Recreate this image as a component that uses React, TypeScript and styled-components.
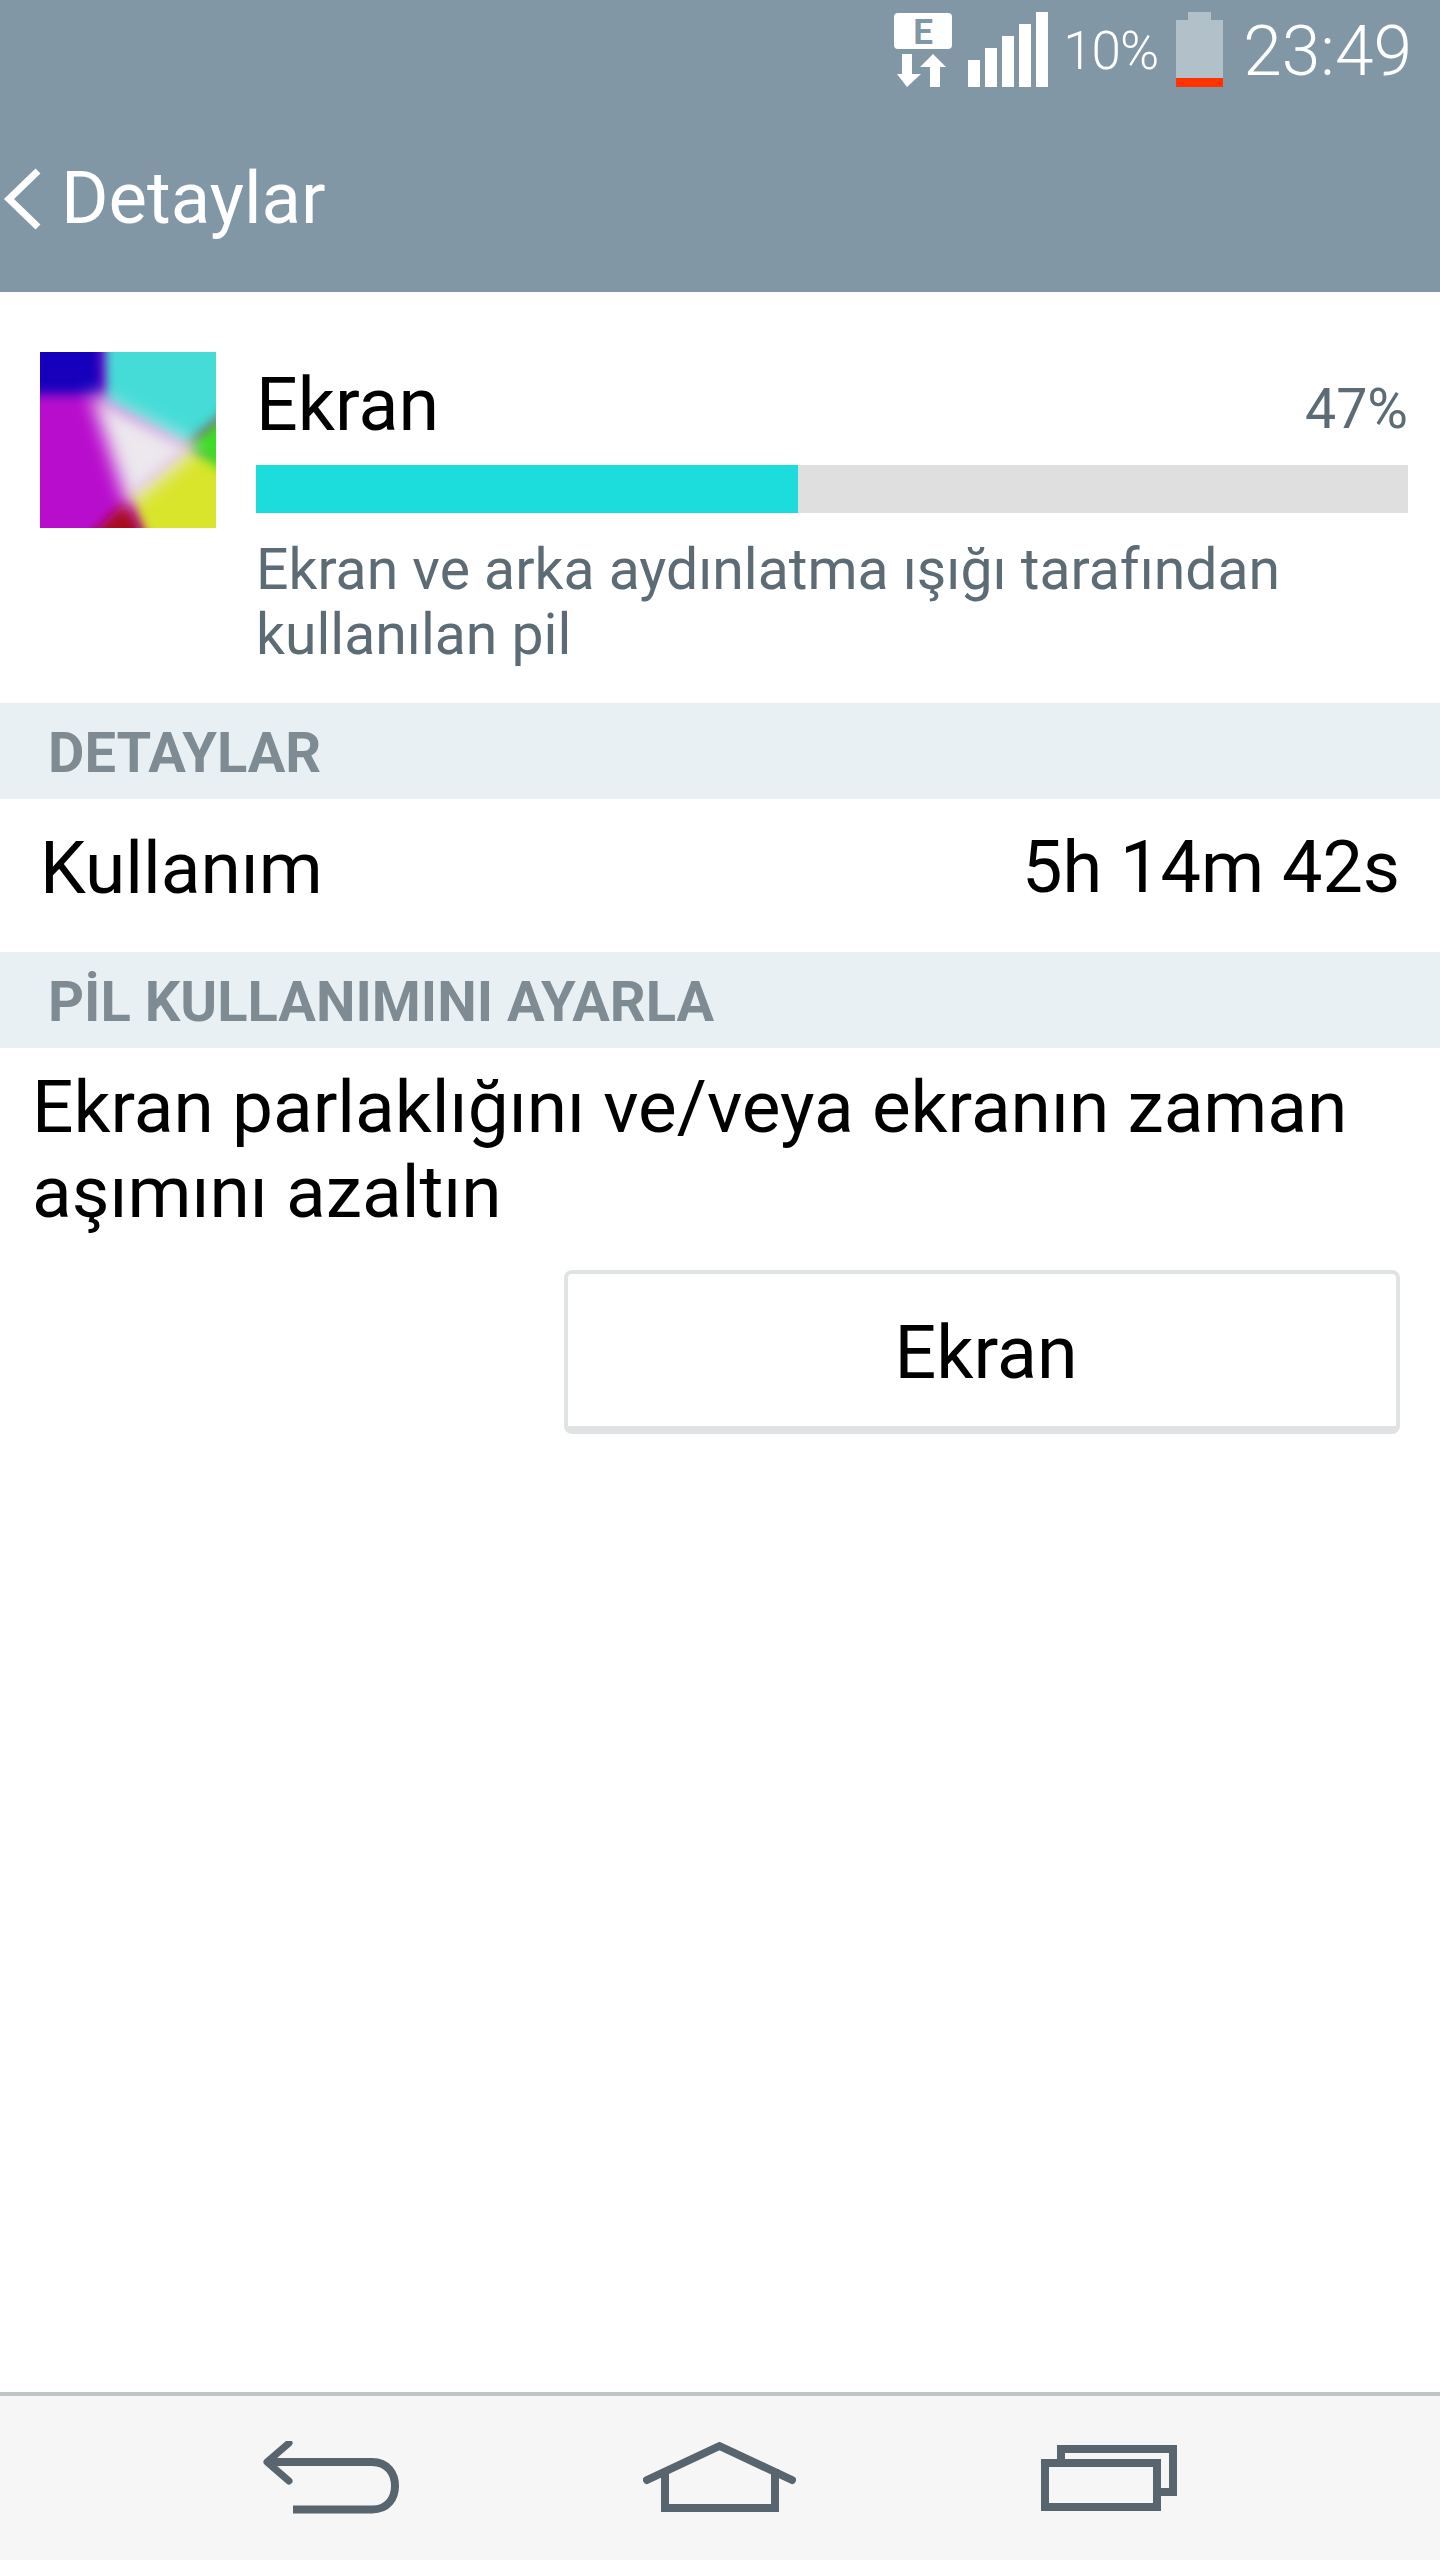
import * as React from 'react';
import styled, { createGlobalStyle } from 'styled-components';

const GlobalStyle = createGlobalStyle`
  html, body {
    margin: 0;
    padding: 0;
    background: #fff;
    font-family: Roboto, "Liberation Sans", sans-serif;
  }
`;

const Screen = styled.div`
  display: flex;
  flex-direction: column;
  width: 1440px;
  height: 2560px;
  background: #fff;
  color: #000;
`;

const Header = styled.header`
  flex: 0 0 292px;
  background: #8197a5;
  color: #fff;
`;

const StatusBar = styled.div`
  display: flex;
  justify-content: flex-end;
  align-items: center;
  gap: 18px;
  height: 75px;
  padding: 12px 28px 0 0;
`;

const NetworkIcon = styled.svg`
  margin-right: -2px;
`;

const Percent = styled.span`
  margin: 3px 0 0 -3px;
  font-size: 53px;
  font-weight: 300;
  line-height: 75px;
  letter-spacing: -1px;
`;

const Clock = styled.span`
  margin: 3px 0 0 2px;
  font-size: 69.5px;
  font-weight: 300;
  line-height: 75px;
`;

const TitleBar = styled.div`
  display: flex;
  align-items: center;
  gap: 20px;
  height: 70px;
  margin-top: 77px;
  padding-left: 3px;
`;

const Title = styled.h1`
  margin: 0;
  font-size: 72.5px;
  font-weight: 400;
  line-height: 70px;
`;

const Summary = styled.section`
  display: flex;
  gap: 40px;
  height: 411px;
  padding: 60px 32px 0 40px;
  box-sizing: border-box;
`;

const AppIcon = styled.svg`
  flex: 0 0 176px;
  width: 176px;
  height: 176px;
`;

const SummaryBody = styled.div`
  flex: 1;
  min-width: 0;
`;

const SummaryHead = styled.div`
  display: flex;
  justify-content: space-between;
  align-items: flex-start;
  height: 113px;
`;

const AppName = styled.span`
  margin-top: 10px;
  font-size: 73.5px;
  line-height: 86px;
`;

const Share = styled.span`
  margin-top: 20px;
  color: #5d6b75;
  font-size: 55.5px;
  line-height: 76px;
`;

const Track = styled.div`
  height: 48px;
  background: #dfdfdf;
`;

const Fill = styled.div`
  height: 100%;
  background: #1cdcdc;
`;

const Description = styled.p`
  margin: 24px 0 0;
  color: #5d6b75;
  font-size: 57.1px;
  line-height: 65px;
`;

const SectionHeader = styled.h2`
  height: 96px;
  margin: 0;
  padding: 4px 0 0 48px;
  box-sizing: border-box;
  background: #e9f0f3;
  color: #7f8b93;
  font-size: 56px;
  font-weight: 700;
  line-height: 92px;
`;

const UsageRow = styled.div`
  display: flex;
  justify-content: space-between;
  align-items: center;
  height: 153px;
  padding: 0 40px 16px 40px;
  box-sizing: border-box;
  font-size: 72px;
`;

const UsageLabel = styled.span`
  font-size: 73px;
`;

const Advice = styled.p`
  margin: 0;
  padding: 17px 40px 0 32px;
  font-size: 73px;
  line-height: 85px;
`;

const ActionRow = styled.div`
  display: flex;
  justify-content: flex-end;
  padding: 35px 40px 0 0;
`;

const ActionButton = styled.button`
  width: 836px;
  height: 164px;
  padding: 6px 0 0 8px;
  border: 4px solid #e0e3e4;
  border-bottom-width: 8px;
  border-radius: 8px;
  background: #fff;
  color: #000;
  font-family: inherit;
  font-size: 73.5px;
`;

const Spacer = styled.div`
  flex: 1;
`;

const NavBar = styled.nav`
  display: grid;
  flex: 0 0 164px;
  grid-template-columns: repeat(3, 1fr);
  align-items: center;
  padding: 0 136px;
  border-top: 4px solid #bdc5c6;
  background: #f6f6f6;
`;

const NavIcon = styled.svg`
  justify-self: center;
  fill: none;
  stroke: #59656e;
  stroke-width: 8;
`;

function ScreenGradient() {
  return (
    <AppIcon viewBox="0 0 176 176">
      <defs>
        <filter id="tight" x="-50%" y="-50%" width="200%" height="200%">
          <feGaussianBlur stdDeviation="6" />
        </filter>
        <filter id="soft" x="-50%" y="-50%" width="200%" height="200%">
          <feGaussianBlur stdDeviation="9" />
        </filter>
      </defs>
      <rect width="176" height="176" fill="#b80dcd" />
      <polygon points="62,-30 210,-30 210,40 145,95 65,50" fill="#45dcd7" filter="url(#tight)" />
      <rect x="-30" y="-30" width="92" height="72" fill="#1400bd" filter="url(#tight)" />
      <polygon points="145,95 210,110 210,210 112,210 90,140" fill="#d9e52b" filter="url(#tight)" />
      <polygon points="210,40 145,95 210,135" fill="#3ade24" filter="url(#tight)" />
      <polygon points="25,210 85,150 118,210" fill="#a8101a" filter="url(#tight)" />
      <polygon points="50,40 160,95 88,155" fill="#ece8ee" filter="url(#soft)" />
    </AppIcon>
  );
}

export default function App() {
  return (
    <>
      <GlobalStyle />
      <Screen>
        <Header>
          <StatusBar>
            <NetworkIcon width="58" height="75" viewBox="0 0 58 75">
              <rect y="1" width="58" height="36" rx="4" fill="#fff" />
              <text x="29" y="32" textAnchor="middle" fontSize="35" fontWeight="700" fontFamily="Roboto" fill="#8197a5">E</text>
              <path d="M8 42h10v20h9L13 75 3 62h5zM36 75V55H26l13-13 13 13H46v20z" fill="#fff" />
            </NetworkIcon>
            <svg width="80" height="75" viewBox="0 0 80 75" fill="#fff">
              <rect y="48" width="12" height="27" />
              <rect x="17" y="36" width="12" height="39" />
              <rect x="34" y="24" width="12" height="51" />
              <rect x="51" y="12" width="12" height="63" />
              <rect x="68" width="12" height="75" />
            </svg>
            <Percent>10%</Percent>
            <svg width="47" height="75" viewBox="0 0 47 75">
              <path d="M12 0h23v8h12v58H0V8h12z" fill="#b2c1c9" />
              <rect y="66" width="47" height="9" fill="#ff3300" />
            </svg>
            <Clock>23:49</Clock>
          </StatusBar>
          <TitleBar>
            <svg width="38" height="62" viewBox="0 0 38 62" fill="none" stroke="#fff" strokeWidth="7">
              <path d="M35 3 6 31l29 28" />
            </svg>
            <Title>Detaylar</Title>
          </TitleBar>
        </Header>

        <Summary>
          <ScreenGradient />
          <SummaryBody>
            <SummaryHead>
              <AppName>Ekran</AppName>
              <Share>47%</Share>
            </SummaryHead>
            <Track>
              <Fill style={{ width: `${(542 / 1152) * 100}%` }} />
            </Track>
            <Description>Ekran ve arka aydınlatma ışığı tarafından kullanılan pil</Description>
          </SummaryBody>
        </Summary>

        <SectionHeader>DETAYLAR</SectionHeader>
        <UsageRow>
          <UsageLabel>Kullanım</UsageLabel>
          <span>5h 14m 42s</span>
        </UsageRow>

        <SectionHeader>PİL KULLANIMINI AYARLA</SectionHeader>
        <Advice>Ekran parlaklığını ve/veya ekranın zaman aşımını azaltın</Advice>
        <ActionRow>
          <ActionButton>Ekran</ActionButton>
        </ActionRow>

        <Spacer />

        <NavBar>
          <NavIcon width="136" height="74" viewBox="0 1 136 74">
            <path d="M30 69.500H109C125 69.500 132 58 132 46 132 34 125 22 109 22H5" />
            <path d="M26 3 4 22l22 19" strokeLinecap="round" strokeLinejoin="round" strokeWidth="7" />
          </NavIcon>
          <NavIcon width="153" height="72" viewBox="0 -1 153 72">
            <path d="M4 37 76.500 3 149 37" strokeLinecap="round" strokeLinejoin="round" />
            <path d="M22 26V65H132V26" />
          </NavIcon>
          <NavIcon width="136" height="66" viewBox="0 0 136 66">
            <path d="M20 14V4H132V47H120" />
            <rect x="4" y="18" width="112" height="44" />
          </NavIcon>
        </NavBar>
      </Screen>
    </>
  );
}
